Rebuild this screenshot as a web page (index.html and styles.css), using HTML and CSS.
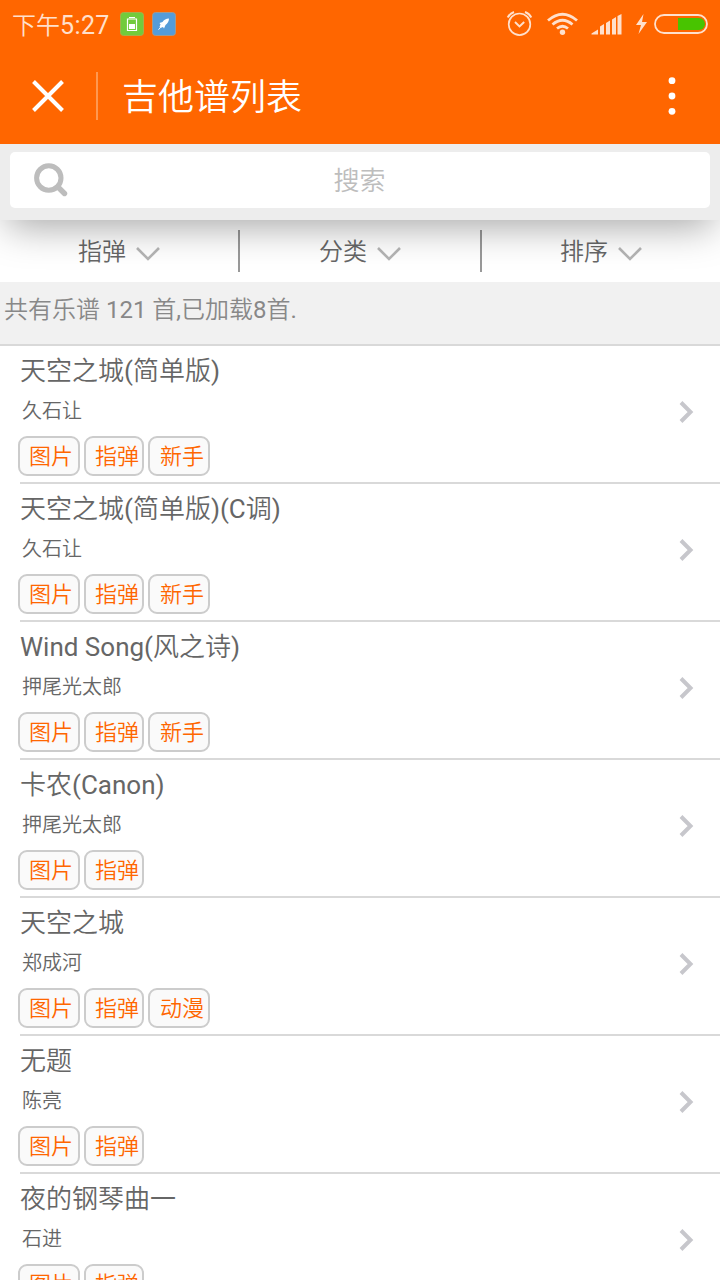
FILE: index.html
```html
<!DOCTYPE html>
<html lang="zh-CN">
<head>
<meta charset="utf-8">
<title>吉他谱列表</title>
<link rel="stylesheet" href="styles.css">
</head>
<body>
<header class="header">
  <div class="status">
    <span class="clock">下午<span class="digits">5:27</span></span>
    <svg class="app-icon" width="24" height="24" viewBox="0 0 24 24"><rect x=".5" y=".5" width="23" height="23" rx="3" fill="#72cb3c" stroke="#a5b04a"/><path d="M9 5.500h6M7.500 7h9v11.500h-9z" fill="none" stroke="#fff" stroke-width="1.200"/><path d="M9 12h6v5H9z" fill="#fff"/></svg>
    <svg class="app-icon" width="24" height="24" viewBox="0 0 24 24"><rect x=".5" y=".5" width="23" height="23" rx="3" fill="#559cd8" stroke="#a09a90"/><path d="M17 6.500c-3 0-5 1.500-6.500 3.500L7.500 11l1 1.500-1 2.500 1 1 2.500-1 1 1.500 1.500-3.500c2-1.500 3.500-3.500 3.500-6.500z" fill="#fff"/><path d="M8.500 15.500l-2 2.200" stroke="#fff"/></svg>
    <svg class="indicators" width="206" height="48" viewBox="0 0 206 48">
      <g fill="none" stroke="#ffe0cc">
        <circle cx="13.500" cy="24.300" r="10.800" stroke-width="1.700"/>
        <path d="M9 22l4.500 4.500 4.700-4.500" stroke-width="1.900"/>
        <path d="M1.700 17.500q2-4 6.300-5.500M25.300 17.500q-2-4-6.300-5.500" stroke-width="1.900"/>
        <path d="M42 20.500q14.500-12.500 29 0" stroke-width="2.800"/>
        <path d="M46.500 24.500q10-8.500 20 0" stroke-width="2.800"/>
        <path d="M51 28.500q5.500-4.500 11 0" stroke-width="2.800"/>
        <rect x="149" y="15" width="52" height="18" rx="9" stroke-width="1.800"/>
      </g>
      <g fill="#ffe0cc">
        <circle cx="56.500" cy="32.300" r="2.700"/>
        <path d="M85.500 34.500v-1l6.500-4v5zM94 34.500v-8l4-2.500v10.500zM100 34.500v-11.500l4-2.500v14zM106 34.500v-15l4-2.500v17.500zM111.500 34.500v-18.500l4-2v20.500z"/>
        <path d="M137.500 14l-7.500 11h5l-2.500 9 8.500-12h-5z"/>
      </g>
      <path d="M172 18h21a6 6 0 0 1 0 12h-21z" fill="#48c400"/>
    </svg>
  </div>
  <div class="titlebar">
    <svg class="close" width="32" height="32" viewBox="0 0 32 32"><path d="M1.500 1.500l29 29M30.500 1.500l-29 29" stroke="#fff" stroke-width="4"/></svg>
    <span class="divider"></span>
    <h1 class="title">吉他谱列表</h1>
    <svg class="more" width="8" height="40" viewBox="0 0 8 40"><g fill="#fff"><circle cx="4" cy="4.700" r="3.400"/><circle cx="4" cy="20" r="3.400"/><circle cx="4" cy="35.300" r="3.400"/></g></svg>
  </div>
</header>
<div class="search">
  <div class="search-box">
    <svg class="search-icon" width="34" height="34" viewBox="0 0 34 34"><g fill="none" stroke="#bdbdbd"><circle cx="14.800" cy="15" r="12.200" stroke-width="5"/><path d="M24 24l6.500 6.500" stroke-width="5.400" stroke-linecap="round"/></g></svg>
    <span>搜索</span>
  </div>
</div>
<nav class="filters">
  <div class="filter"><span>指弹</span><svg class="caret" width="24" height="14" viewBox="0 0 24 14"><path d="M1 1l11 11L23 1"/></svg></div>
  <div class="filter"><span>分类</span><svg class="caret" width="24" height="14" viewBox="0 0 24 14"><path d="M1 1l11 11L23 1"/></svg></div>
  <div class="filter"><span>排序</span><svg class="caret" width="24" height="14" viewBox="0 0 24 14"><path d="M1 1l11 11L23 1"/></svg></div>
</nav>
<div class="summary">共有乐谱 121 首,已加载8首.</div>
<main class="list" id="list"></main>
<script src="list.js"></script>
</body>
</html>
```
FILE: styles.css
```css
* { box-sizing: border-box; }
body {
  margin: 0;
  width: 720px;
  height: 1280px;
  overflow: hidden;
  background: #fff;
  color: #666;
  font-family: Roboto, "Noto Sans CJK SC DemiLight", "Noto Sans CJK SC", sans-serif;
  font-weight: 400;
}
svg { display: block; flex: none; }
.header { position: relative; z-index: 1; height: 144px; background: #f60; color: #fff; }
.status { display: flex; align-items: center; height: 48px; padding: 0 8px 0 12px; }
.clock { width: 108px; padding-top: 3px; color: #ffe0cc; font-size: 24px; line-height: 45px; white-space: nowrap; }
.digits { font-size: 25px; letter-spacing: .4px; }
.app-icon { margin-right: 8px; }
.indicators { margin-left: auto; }
.titlebar { display: flex; align-items: center; height: 96px; padding: 0 44px 0 32px; }
.divider { width: 2px; height: 48px; margin: 0 24px 0 32px; background: #ff9850; }
.title { margin: 3px 0 0; font-size: 36px; font-weight: 400; line-height: 48px; }
.more { margin-left: auto; }
.search {
  position: relative;
  height: 76px;
  padding: 8px 10px;
  background: #ededed;
  box-shadow: 0 14px 38px -7px rgba(0, 0, 0, .35);
}
.search-box {
  display: flex;
  align-items: center;
  height: 56px;
  padding-left: 24px;
  border-radius: 5px;
  background: #fff;
  color: #bdbdbd;
  font-size: 26px;
}
.search-box span { flex: 1; margin: -4px 59px 0 0; text-align: center; }
.filters { display: grid; grid-template-columns: 240px 242px 238px; height: 62px; padding: 10px 0; }
.filter {
  display: flex;
  align-items: center;
  justify-content: center;
  height: 42px;
  border-right: 2px solid #999;
  font-size: 24px;
}
.filter span { margin-top: -3px; }
.filter:last-child { border-right: 0; }
.caret { margin: 5px 0 0 10px; fill: none; stroke: #b5b5b5; stroke-width: 2.6; }
.summary {
  position: relative;
  height: 64px;
  padding: 0 4px;
  border-bottom: 2px solid #d9d9d9;
  background: #f1f1f1;
  color: #888;
  font-size: 24px;
  line-height: 56px;
}
.item {
  display: flex;
  align-items: center;
  justify-content: space-between;
  height: 138px;
  margin-left: 20px;
  padding-right: 25px;
  border-bottom: 2px solid #d9d9d9;
}
.song { height: 136px; }
.name { height: 44px; margin: 0; padding-top: 6px; font-size: 26px; font-weight: 400; line-height: 38px; white-space: nowrap; }
.artist { height: 46px; margin: 0; padding: 6px 0 0 2px; font-size: 20px; line-height: 30px; }
.tags { display: flex; gap: 4px; margin-left: -2px; }
.tag {
  width: 62px;
  height: 40px;
  padding-left: 9px;
  border: 2px solid #ccc;
  border-radius: 9px;
  background: #fafafa;
  color: #f60;
  font-size: 22px;
  line-height: 38px;
  white-space: nowrap;
}
.tag:nth-child(2) { width: 60px; }
.tag:nth-child(3) { padding-left: 10px; }
.chevron { margin-top: -4px; fill: none; stroke: #c7c7cc; stroke-width: 4; }
```
FILE: list.js
```js
const songs = [
  ['天空之城(简单版)', '久石让', ['图片', '指弹', '新手']],
  ['天空之城(简单版)(C调)', '久石让', ['图片', '指弹', '新手']],
  ['Wind Song(风之诗)', '押尾光太郎', ['图片', '指弹', '新手']],
  ['卡农(Canon)', '押尾光太郎', ['图片', '指弹']],
  ['天空之城', '郑成河', ['图片', '指弹', '动漫']],
  ['无题', '陈亮', ['图片', '指弹']],
  ['夜的钢琴曲一', '石进', ['图片', '指弹']]
];
document.getElementById('list').innerHTML = songs.map(([name, artist, tags]) => `
  <article class="item">
    <div class="song">
      <h2 class="name">${name}</h2>
      <p class="artist">${artist}</p>
      <div class="tags">${tags.map(tag => `<span class="tag">${tag}</span>`).join('')}</div>
    </div>
    <svg class="chevron" width="16" height="24" viewBox="0 0 16 24"><path d="M2 2.500l9.500 9.500L2 21.500"/></svg>
  </article>`).join('');
```
